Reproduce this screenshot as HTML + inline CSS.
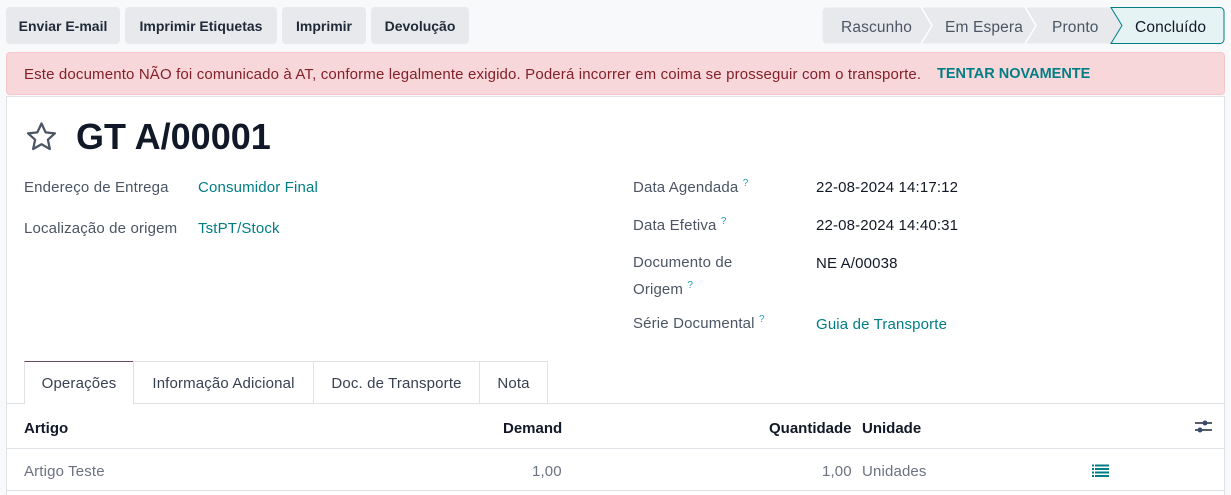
<!DOCTYPE html>
<html><head><meta charset="utf-8"><style>
*{box-sizing:border-box;margin:0;padding:0}
html,body{width:1231px;height:495px;overflow:hidden}
body{background:#f8f9fa;font-family:"Liberation Sans",sans-serif;font-size:15px;letter-spacing:.15px;color:#374151;position:relative}
.a{position:absolute;white-space:nowrap}
.btn{position:absolute;top:7px;height:37px;background:#e7e9ed;border-radius:4px;font-weight:bold;font-size:14px;letter-spacing:0;color:#1f2937;line-height:38px;text-align:center}
.lbl{color:#4b5563}
.lnk{color:#017e84}
.q{color:#17a2b8;font-size:10px;vertical-align:super}
.th{font-weight:bold;color:#111827;letter-spacing:0}
.tab{position:absolute;top:361px;height:42px;border:1px solid #dee2e6;border-bottom:none;text-align:center;line-height:44px;color:#374151}
</style></head><body>
<div class="btn" style="left:6px;width:114px">Enviar E-mail</div>
<div class="btn" style="left:125px;width:152px">Imprimir Etiquetas</div>
<div class="btn" style="left:282px;width:84px">Imprimir</div>
<div class="btn" style="left:371px;width:98px">Devolução</div>

<svg class="a" style="left:822px;top:7px" width="403" height="37">
<rect x="0.5" y="0.5" width="402" height="36" rx="4" fill="#e7e9ed"/>
<path d="M289 0.5 H398 a4 4 0 0 1 4 4 V32.5 a4 4 0 0 1 -4 4 H289 L300 18.5 Z" fill="#e6f3f4" stroke="#017e84"/>
<path d="M99 0 L110 18.5 L99 37 M203 0 L214 18.5 L203 37" fill="none" stroke="#fff" stroke-width="1.5"/>
<text x="19" y="25" font-family="Liberation Sans" font-size="15.5" fill="#4b5563">Rascunho</text>
<text x="123" y="25" font-family="Liberation Sans" font-size="15.5" fill="#4b5563">Em Espera</text>
<text x="230" y="25" font-family="Liberation Sans" font-size="15.5" fill="#4b5563">Pronto</text>
<text x="313" y="25" font-family="Liberation Sans" font-size="15.5" fill="#111827">Concluído</text>
</svg>

<div class="a" style="left:6px;top:52px;width:1219px;height:43px;background:#f8d7da;border-radius:4px;border:1px solid #f5c6cb"></div>
<div class="a" style="left:24px;top:66px;color:#842029">Este documento NÃO foi comunicado à AT, conforme legalmente exigido. Poderá incorrer em coima se prosseguir com o transporte.</div>
<div class="a" style="left:937px;top:66px;color:#017e84;font-weight:bold;font-size:14.5px;letter-spacing:0">TENTAR NOVAMENTE</div>

<div class="a" style="left:6px;top:96px;width:1219px;height:410px;background:#fff;border:1px solid #dee2e6;border-bottom:none"></div>

<svg class="a" style="left:24px;top:120px" width="35" height="34" viewBox="0 0 24 24"><path d="M12 2.5l2.9 6.2 6.6.7-5 4.5 1.4 6.6L12 17.1 6.1 20.5l1.4-6.6-5-4.5 6.6-.7z" fill="none" stroke="#4b5563" stroke-width="1.6" stroke-linejoin="round"/></svg>
<div class="a" style="left:76px;top:116px;font-size:36px;font-weight:bold;color:#111827;letter-spacing:0">GT A/00001</div>

<div class="a lbl" style="left:24px;top:179px">Endereço de Entrega</div>
<div class="a lnk" style="left:198px;top:179px">Consumidor Final</div>
<div class="a lbl" style="left:24px;top:220px">Localização de origem</div>
<div class="a lnk" style="left:198px;top:220px">TstPT/Stock</div>

<div class="a lbl" style="left:633px;top:178px">Data Agendada <span class="q">?</span></div>
<div class="a" style="left:816px;top:179px;color:#111827">22-08-2024 14:17:12</div>
<div class="a lbl" style="left:633px;top:216px">Data Efetiva <span class="q">?</span></div>
<div class="a" style="left:816px;top:217px;color:#111827">22-08-2024 14:40:31</div>
<div class="a lbl" style="left:633px;top:251px;line-height:23px">Documento de<br>Origem <span class="q">?</span></div>
<div class="a" style="left:816px;top:255px;color:#111827">NE A/00038</div>
<div class="a lbl" style="left:633px;top:314px">Série Documental <span class="q">?</span></div>
<div class="a lnk" style="left:816px;top:316px">Guia de Transporte</div>

<div class="a" style="left:6px;top:403px;width:1219px;border-top:1px solid #dee2e6"></div>
<div class="tab" style="left:24px;width:110px;height:43px;background:#fff;border-top:1px solid #6b4a5f">Operações</div>
<div class="tab" style="left:133px;width:181px">Informação Adicional</div>
<div class="tab" style="left:313px;width:167px">Doc. de Transporte</div>
<div class="tab" style="left:479px;width:69px">Nota</div>

<div class="a th" style="left:24px;top:420px">Artigo</div>
<div class="a th" style="left:503px;top:420px">Demand</div>
<div class="a th" style="left:769px;top:420px">Quantidade</div>
<div class="a th" style="left:862px;top:420px">Unidade</div>
<svg class="a" style="left:1194px;top:419px" width="20" height="16"><path d="M1 4H18M1 11H18" stroke="#1f2937" stroke-width="1.5"/><circle cx="11" cy="4" r="2.5" fill="#374a6b"/><circle cx="6" cy="11" r="2.5" fill="#374a6b"/></svg>
<div class="a" style="left:6px;top:448px;width:1219px;border-top:1px solid #dee2e6"></div>
<div class="a" style="left:24px;top:463px;color:#6b7280">Artigo Teste</div>
<div class="a" style="left:532px;top:463px;color:#6b7280">1,00</div>
<div class="a" style="left:822px;top:463px;color:#6b7280">1,00</div>
<div class="a" style="left:862px;top:463px;color:#6b7280">Unidades</div>
<svg class="a" style="left:1092px;top:464px" width="17" height="13"><path d="M0 1.5H17M0 5H17M0 8.5H17M0 12H17" stroke="#017e84" stroke-width="2"/><path d="M2.5 0V13" stroke="#fff" stroke-width="1"/></svg>
<div class="a" style="left:6px;top:490px;width:1219px;border-top:1px solid #dee2e6"></div>
</body></html>
